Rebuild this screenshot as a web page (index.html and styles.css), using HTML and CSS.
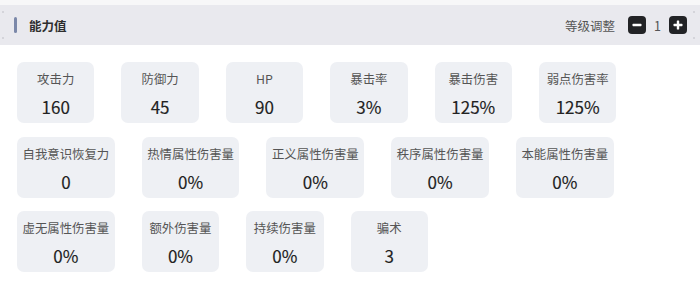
FILE: index.html
```html
<!DOCTYPE html>
<html lang="zh-CN">
<head>
<meta charset="utf-8">
<link rel="stylesheet" href="styles.css">
</head>
<body>
<div class="top-strip"></div>
<header class="panel-head">
  <span class="dot dot-tl"></span>
  <span class="dot dot-bl"></span>
  <span class="dot dot-tr"></span>
  <span class="dot dot-br"></span>
  <div class="title"><span class="title-bar"></span><span class="title-text">能力值</span></div>
  <div class="level">
    <span class="level-label">等级调整</span>
    <button class="level-btn" aria-label="minus"><svg width="10" height="10" viewBox="0 0 10 10"><rect x="0.5" y="3.8" width="9" height="2.4" rx="0.6" fill="#fff"/></svg></button>
    <span class="level-num">1</span>
    <button class="level-btn" aria-label="plus"><svg width="10" height="10" viewBox="0 0 10 10"><rect x="0.5" y="3.8" width="9" height="2.4" rx="0.6" fill="#fff"/><rect x="3.8" y="0.5" width="2.4" height="9" rx="0.6" fill="#fff"/></svg></button>
  </div>
</header>
<main class="stats">
  <div class="card"><div class="label">攻击力</div><div class="value">160</div></div>
  <div class="card"><div class="label">防御力</div><div class="value">45</div></div>
  <div class="card"><div class="label">HP</div><div class="value">90</div></div>
  <div class="card"><div class="label">暴击率</div><div class="value">3%</div></div>
  <div class="card"><div class="label">暴击伤害</div><div class="value">125%</div></div>
  <div class="card"><div class="label">弱点伤害率</div><div class="value">125%</div></div>
  <div class="card"><div class="label">自我意识恢复力</div><div class="value">0</div></div>
  <div class="card"><div class="label">热情属性伤害量</div><div class="value">0%</div></div>
  <div class="card"><div class="label">正义属性伤害量</div><div class="value">0%</div></div>
  <div class="card"><div class="label">秩序属性伤害量</div><div class="value">0%</div></div>
  <div class="card"><div class="label">本能属性伤害量</div><div class="value">0%</div></div>
  <div class="card"><div class="label">虚无属性伤害量</div><div class="value">0%</div></div>
  <div class="card"><div class="label">额外伤害量</div><div class="value">0%</div></div>
  <div class="card"><div class="label">持续伤害量</div><div class="value">0%</div></div>
  <div class="card"><div class="label">骗术</div><div class="value">3</div></div>
</main>
</body>
</html>
```
FILE: styles.css
```css
html, body {
  margin: 0;
  padding: 0;
  background: #ffffff;
  font-family: "Noto Sans CJK SC", "Noto Sans", sans-serif;
  color: #333;
}
.top-strip {
  height: 5px;
  background: #f7f7f8;
}
.panel-head {
  position: relative;
  height: 40px;
  background: #e9e9ee;
  display: flex;
  align-items: center;
  justify-content: space-between;
  padding: 0 13px 0 14px;
}
.dot {
  position: absolute;
  width: 2px;
  height: 2px;
  background: #d4d4da;
}
.dot-tl { left: 2px; top: 6px; }
.dot-bl { left: 2px; top: 32px; }
.dot-tr { right: 5px; top: 6px; }
.dot-br { right: 5px; top: 32px; }
.title {
  display: flex;
  align-items: center;
  gap: 12px;
}
.title-bar {
  width: 3px;
  height: 16px;
  border-radius: 2px;
  background: #7b88a9;
}
.title-text {
  font-size: 12.5px;
  font-weight: 700;
  color: #2e2e2e;
}
.level {
  display: flex;
  align-items: center;
}
.level-label {
  font-size: 12.5px;
  color: #555;
  margin-right: 13px;
}
.level-btn {
  width: 18px;
  height: 18px;
  border: 0;
  padding: 0;
  border-radius: 4px;
  background: #222326;
  display: flex;
  align-items: center;
  justify-content: center;
}
.level-num {
  font-size: 12.5px;
  color: #555;
  margin: 0 8px;
}
.stats {
  display: flex;
  flex-wrap: wrap;
  column-gap: 27px;
  row-gap: 13.5px;
  padding: 17px 17px;
}
.card {
  min-width: 77.4px;
  box-sizing: border-box;
  height: 61px;
  padding: 7px 5.5px 0;
  border-radius: 7px;
  background: #eef0f4;
  text-align: center;
}
.label {
  font-size: 12.4px;
  line-height: 20px;
  color: #555;
  white-space: nowrap;
}
.value {
  margin-top: 7px;
  font-size: 17px;
  line-height: 22px;
  font-weight: 400;
  color: #222;
  -webkit-text-stroke: 0.15px #222;
}
```
